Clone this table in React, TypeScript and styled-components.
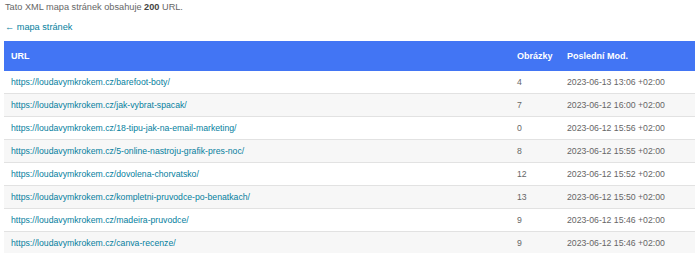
import React from 'react';
import styled, { createGlobalStyle } from 'styled-components';

const GlobalStyle = createGlobalStyle`
    html, body {
        margin: 0;
        padding: 0;
        background: #fff;
    }
    body {
        font-family: "Liberation Sans", Arial, sans-serif;
        color: #666;
    }
`;

interface IUrlItem {
    loc: string;
    images: number;
    lastmod: string;
}

const urls: IUrlItem[] = [
    { loc: 'https://loudavymkrokem.cz/barefoot-boty/', images: 4, lastmod: '2023-06-13 13:06 +02:00' },
    { loc: 'https://loudavymkrokem.cz/jak-vybrat-spacak/', images: 7, lastmod: '2023-06-12 16:00 +02:00' },
    { loc: 'https://loudavymkrokem.cz/18-tipu-jak-na-email-marketing/', images: 0, lastmod: '2023-06-12 15:56 +02:00' },
    { loc: 'https://loudavymkrokem.cz/5-online-nastroju-grafik-pres-noc/', images: 8, lastmod: '2023-06-12 15:55 +02:00' },
    { loc: 'https://loudavymkrokem.cz/dovolena-chorvatsko/', images: 12, lastmod: '2023-06-12 15:52 +02:00' },
    { loc: 'https://loudavymkrokem.cz/kompletni-pruvodce-po-benatkach/', images: 13, lastmod: '2023-06-12 15:50 +02:00' },
    { loc: 'https://loudavymkrokem.cz/madeira-pruvodce/', images: 9, lastmod: '2023-06-12 15:46 +02:00' },
    { loc: 'https://loudavymkrokem.cz/canva-recenze/', images: 9, lastmod: '2023-06-12 15:46 +02:00' },
];

const Content = styled.div`
    padding: 1px 5px 0 4px;
`;

const Description = styled.p`
    margin: 0 0 0 1px;
    font-size: 9.2px;
    line-height: 12px;
    color: #666;

    strong {
        color: #444;
    }
`;

const BackLink = styled.a`
    display: block;
    margin: 8px 0 0 1px;
    font-size: 9.2px;
    line-height: 12px;
    color: #05809e;
    text-decoration: none;
`;

const Table = styled.div`
    margin-top: 8px;
`;

const Row = styled.div<{ $header?: boolean; $striped?: boolean }>`
    display: grid;
    grid-template-columns: 1fr 50px 135px;
    align-items: center;
    box-sizing: border-box;
    height: ${({ $header }) => ($header ? '30px' : '23px')};
    background-color: ${({ $header, $striped }) =>
        $header ? '#4275f4' : $striped ? '#f7f7f7' : '#fff'};
    border-bottom: ${({ $header }) => ($header ? 'none' : '1px solid #e2e2e2')};
    color: ${({ $header }) => ($header ? '#fff' : '#666')};
    font-size: ${({ $header }) => ($header ? '9px' : '8.7px')};
    font-weight: ${({ $header }) => ($header ? 'bold' : 'normal')};
    white-space: nowrap;
`;

const Cell = styled.div`
    padding: 0 7px;
    line-height: 11px;

    a {
        color: #05809e;
        text-decoration: none;
    }
`;

const App = () => {
    return (
        <>
            <GlobalStyle />
            <Content>
                <Description>
                    Tato XML mapa stránek obsahuje <strong>200</strong> URL.
                </Description>
                <BackLink href="#">← mapa stránek</BackLink>
                <Table>
                    <Row $header>
                        <Cell>URL</Cell>
                        <Cell>Obrázky</Cell>
                        <Cell>Poslední Mod.</Cell>
                    </Row>
                    {urls.map((item, i) => (
                        <Row key={item.loc} $striped={i % 2 === 1}>
                            <Cell>
                                <a href={item.loc}>{item.loc}</a>
                            </Cell>
                            <Cell>{item.images}</Cell>
                            <Cell>{item.lastmod}</Cell>
                        </Row>
                    ))}
                </Table>
            </Content>
        </>
    );
};

export default App;
